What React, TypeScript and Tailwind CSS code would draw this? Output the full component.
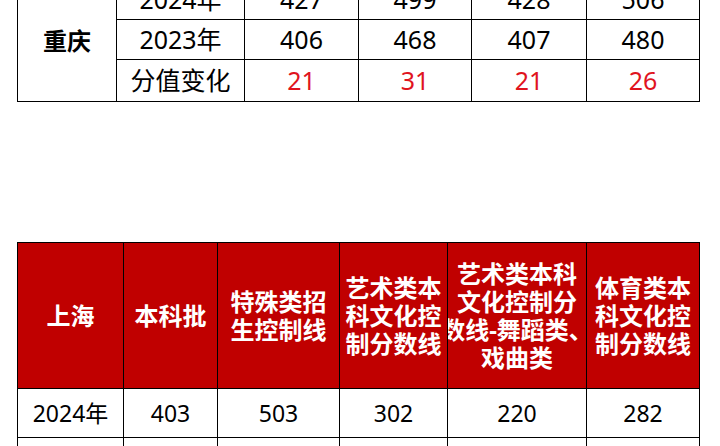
import React from 'react';

const topCols = [99, 128, 114, 113, 115, 113];
const bottomCols = [106, 94, 122, 108, 139, 113];

const chongqing = [
  { label: '2024年', values: ['427', '499', '428', '506'], red: false, h: 'h-[40px]' },
  { label: '2023年', values: ['406', '468', '407', '480'], red: false, h: 'h-[40px]' },
  { label: '分值变化', values: ['21', '31', '21', '26'], red: true, h: 'h-[42px]' },
];

const headers: string[][] = [
  ['上海'],
  ['本科批'],
  ['特殊类招', '生控制线'],
  ['艺术类本', '科文化控', '制分数线'],
  ['艺术类本科', '文化控制分', '数线-舞蹈类、', '戏曲类'],
  ['体育类本', '科文化控', '制分数线'],
];

const shanghai2024 = ['2024年', '403', '503', '302', '220', '282'];

const App: React.FC = () => {
  return (
    <div
      className="h-[446px] w-[720px] overflow-hidden bg-white text-black"
      style={{ fontFamily: '"Noto Sans", "Noto Sans CJK SC", sans-serif' }}
    >
      {/* 重庆 table, scrolled so its first row is cut */}
      <div className="-mt-[21px] pl-[17px]">
        <table className="table-fixed border-collapse w-[682px]">
          <colgroup>
            {topCols.map((w, i) => (
              <col key={i} style={{ width: w }} />
            ))}
          </colgroup>
          <tbody>
            {chongqing.map((row, ri) => (
              <tr key={row.label} className={row.h}>
                {ri === 0 && (
                  <td rowSpan={3} className="border border-black text-center align-middle text-[24px] font-bold">
                    重庆
                  </td>
                )}
                <td className="border border-black text-center align-middle text-[25px] leading-none">{row.label}</td>
                {row.values.map((v, vi) => (
                  <td
                    key={vi}
                    className={`border border-black text-center align-middle text-[25px] leading-none ${row.red ? 'text-[#e0141e]' : ''}`}
                  >
                    {v}
                  </td>
                ))}
              </tr>
            ))}
          </tbody>
        </table>
      </div>

      {/* 上海 table */}
      <div className="mt-[140px] pl-[17px]">
        <table className="table-fixed border-collapse w-[682px]">
          <colgroup>
            {bottomCols.map((w, i) => (
              <col key={i} style={{ width: w }} />
            ))}
          </colgroup>
          <tbody>
            <tr className="h-[146px] bg-[#c00000]">
              {headers.map((lines, i) => (
                <td key={i} className="border border-black p-0 align-middle">
                  <div className="flex flex-col items-center overflow-hidden text-[24px] font-bold leading-[28px] text-white">
                    {lines.map((l) => (
                      <span key={l} className="whitespace-nowrap">
                        {l}
                      </span>
                    ))}
                  </div>
                </td>
              ))}
            </tr>
            <tr className="h-[49px]">
              {shanghai2024.map((v, i) => (
                <td key={i} className="border border-black text-center align-middle text-[23px] leading-none">
                  {v}
                </td>
              ))}
            </tr>
            <tr className="h-[49px]">
              {shanghai2024.map((_, i) => (
                <td key={i} className="border border-black">
                  &nbsp;
                </td>
              ))}
            </tr>
          </tbody>
        </table>
      </div>
    </div>
  );
};

export default App;
